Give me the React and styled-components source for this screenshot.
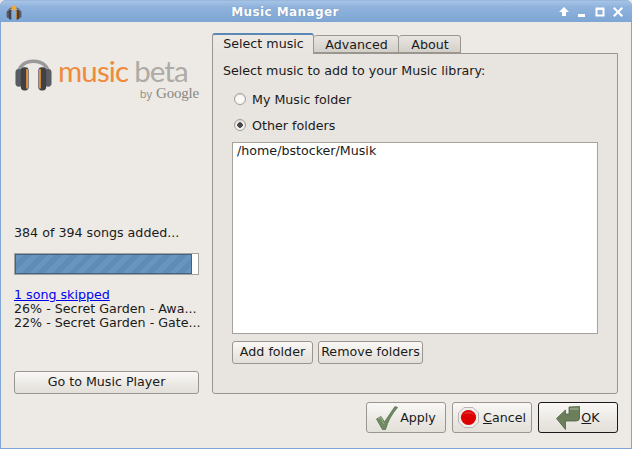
import React from "react";
import styled, { createGlobalStyle } from "styled-components";

const Global = createGlobalStyle`
  html, body { margin: 0; padding: 0; background: #edeae6; }
  #root { width: 632px; height: 449px; overflow: hidden; }
  * { box-sizing: border-box; }
`;

const Win = styled.div`
  width: 632px; height: 449px; display: flex; flex-direction: column;
  font-family: "DejaVu Sans", sans-serif; font-size: 12.67px; color: #1a1a1a;
  background: #7fa6d4; border-radius: 6px 6px 0 0; overflow: hidden;
`;
const TitleBar = styled.div`
  height: 22px; flex: none; display: flex; align-items: center; padding: 0 8px 0 6px;
  background: linear-gradient(#a5c3e6 0, #8fb2dc 30%, #7ea6d5 100%);
  border-top: 1px solid #9ab8dc;
`;
const TitleIcon = styled.svg` width: 16px; height: 16px; flex: none; `;
const Title = styled.div`
  flex: 1; text-align: center; color: #fff; font-weight: 700; font-size: 12px; letter-spacing: 0.4px;
  padding-right: 10px; text-shadow: 0 0 1px #58789f;
`;
const Controls = styled.div` display: flex; align-items: center; gap: 6px; `;
const CtrlIcon = styled.svg` width: 12px; height: 12px; display: block; `;
const Body = styled.div`
  flex: 1; margin: 0 1px 1px; background: #edeae6; display: flex; flex-direction: column;
  padding: 11px 13px 15px 13px; min-height: 0;
`;
const Main = styled.div` display: flex; gap: 13px; height: 361px; flex: none; `;
const Left = styled.div` width: 185px; flex: none; display: flex; flex-direction: column; `;
const Logo = styled.div` display: flex; height: 52px; margin-top: 19px; align-items: flex-start; `;
const Phones = styled.svg` width: 39px; height: 40px; flex: none; `;
const LogoText = styled.div` margin-left: 5px; display: flex; flex-direction: column; width: 141px; margin-top: 1px; `;
const LogoLine = styled.div` font-family: Lato, "Open Sans", sans-serif; font-size: 29.5px; font-weight: 400; line-height: 36px; height: 35px; white-space: nowrap; letter-spacing: -0.9px; `;
const Orange = styled.span` color: #ef8b3a; `;
const Gray = styled.span` color: #aeaaa5; margin-left: 6px; `;
const By = styled.div` text-align: right; font-size: 11px; line-height: 14px; color: #8e8b87; font-family: "Open Sans", sans-serif; white-space: nowrap; margin-top: -2px; `;
const Goog = styled.span` font-family: "Liberation Serif", serif; font-size: 15px; margin-left: 4px; color: #8a8884; letter-spacing: -0.2px; `;
const Status = styled.div` margin-top: 119px; height: 19px; line-height: 19px; white-space: nowrap; `;
const Progress = styled.div`
  margin-top: 11px; height: 22px; border: 1px solid #a5a29c; background: #fff; display: flex;
`;
const Fill = styled.div`
  height: 100%; border: 1px solid #3f6488;
  background: repeating-linear-gradient(135deg, #6895c0 0 5.5px, #5f8cb7 5.5px 11px);
`;
const LinkText = styled.a` display: block; margin-top: 13px; color: #0000ee; text-decoration: underline; line-height: 14px; height: 14px; `;
const Line = styled.div` line-height: 14px; height: 14px; white-space: nowrap; `;
const Btn = styled.div`
  display: flex; align-items: center; justify-content: center; white-space: nowrap; flex: none;
  height: ${p => p.$h || 23}px; width: ${p => (p.$w ? p.$w + "px" : "auto")};
  padding-bottom: ${p => (p.$h ? 0 : 2)}px;
  border: 1px solid ${p => (p.$def ? "#1a1a1a" : "#9a968f")}; border-radius: 3px;
  background: linear-gradient(#f9f8f6, #ebe8e3 60%, #e3e0da);
`;
const Spacer = styled.div` flex: 1; `;
const Right = styled.div` flex: 1; display: flex; flex-direction: column; min-width: 0; `;
const Tabs = styled.div` display: flex; height: 20px; align-items: flex-end; position: relative; z-index: 1; flex: none; `;
const Tab = styled.div`
  width: ${p => p.$w}px; height: ${p => (p.$active ? 21 : 18)}px; flex: none; text-align: center;
  line-height: 18px; padding-left: 1px;
  border: 1px solid #9a968f; border-bottom: ${p => (p.$active ? "none" : "1px solid #9a968f")}; border-left-width: ${p => (p.$first ? 1 : 0)}px;
  border-top: ${p => (p.$active ? "2px solid #5b87b5" : "1px solid #9a968f")};
  border-radius: 3px 3px 0 0;
  background: ${p => (p.$active ? "linear-gradient(#edeae6, #e8e4df)" : "linear-gradient(#e9e6e1, #d3cfc9)")};
  margin-bottom: ${p => (p.$active ? -1 : 0)}px;
`;
const Panel = styled.div`
  flex: 1; border: 1px solid #9a968f; border-radius: 0 0 3px 3px; background: #e8e4df;
  padding: 9px 19px 19px 10px; display: flex; flex-direction: column; min-height: 0;
`;
const Prompt = styled.div` line-height: 16px; height: 16px; white-space: nowrap; `;
const RadioRow = styled.div` display: flex; align-items: center; height: 16px; margin-top: ${p => p.$mt}px; margin-left: 11px; gap: 6px; `;
const Radio = styled.span`
  width: 12px; height: 12px; border-radius: 50%; flex: none; border: 1px solid #a09c96;
  background: ${p => (p.$on ? "radial-gradient(circle, #45474a 0 2.5px, #f4f2ef 3px)" : "#faf9f7")};
  box-shadow: inset 0 1px 1px #d8d4ce;
`;
const ListBox = styled.div`
  margin: 9px 0 0 9px; width: 366px; height: 192px; background: #fff; border: 1px solid #a5a29c; padding: 0 4px;
  line-height: 15px; flex: none;
`;
const FolderRow = styled.div` display: flex; gap: 5px; margin: 7px 0 0 9px; `;
const Bottom = styled.div` display: flex; justify-content: flex-end; gap: 6px; margin-top: 8px; flex: none; `;
const Under = styled.span` text-decoration: underline; `;
const BtnIcon = styled.svg` flex: none; margin-right: ${p => p.$mr ?? 2}px; `;

const Check = () => (
  <BtnIcon width="22" height="24" viewBox="0 0 22 24" $mr={2}>
    <path d="M0.5 13 L5 10.5 L8.5 16 L19 0.5 L21.5 1.5 Q13 11 9.5 23.5 L6.5 23.5 Z" fill="#6f8b62" stroke="#55704b" strokeWidth="0.8" strokeLinejoin="round" />
    <path d="M2 13 L5 11.5 L8 18" fill="none" stroke="#9db191" strokeWidth="1" />
  </BtnIcon>
);
const Stop = () => (
  <BtnIcon width="21" height="21" viewBox="0 0 21 21" $mr={4}>
    <polygon points="6,0.5 15,0.5 20.5,6 20.5,15 15,20.5 6,20.5 0.5,15 0.5,6" fill="#efeeec" stroke="#b9b6b1" />
    <circle cx="10.5" cy="10.5" r="7.6" fill="#dc0000" />
    <path d="M4 8 Q10.5 1.5 17 8 Q10.5 5 4 8" fill="#e84a4a" opacity="0.6" />
  </BtnIcon>
);
const OkArrow = () => (
  <BtnIcon width="24" height="24" viewBox="0 0 24 24" $mr={1}>
    <path d="M0.5 12.5 L9.5 4 L9.5 8 L13 8 L13 1 L23.5 0.5 L23.5 12 Q23.5 15 20 15 L9.5 15 L9.5 23.5 Z" fill="#6b7f5a" stroke="#4f6044" strokeWidth="0.8" strokeLinejoin="round" />
    <path d="M14 2 L22.5 1.5 L22.5 4 L14 4 Z" fill="#8ea080" />
  </BtnIcon>
);

const HeadphonesGlyph = ({ band }) => (
  <>
    <path d="M5 24 C2 4 38 4 35 24" fill="none" stroke={band} strokeWidth="3.6" />
    <rect x="1.5" y="17" width="7" height="18" rx="3.5" fill="#5a5c62" />
    <rect x="31.5" y="17" width="7" height="18" rx="3.5" fill="#5a5c62" />
    <rect x="7" y="15" width="8" height="24" rx="3.5" fill="#3f4146" />
    <rect x="25" y="15" width="8" height="24" rx="3.5" fill="#3f4146" />
    <rect x="12.5" y="17" width="1.8" height="20" fill="#f29a35" />
    <rect x="25.7" y="17" width="1.8" height="20" fill="#f29a35" />
  </>
);

export default function App() {
  return (
    <>
      <Global />
      <Win>
        <TitleBar>
          <TitleIcon viewBox="0 0 40 40">
            <HeadphonesGlyph band="#6b6d70" />
            <circle cx="20" cy="10" r="6" fill="#f2a93a" />
          </TitleIcon>
          <Title>Music Manager</Title>
          <Controls>
            <CtrlIcon viewBox="0 0 12 12"><path d="M6 1 L11 6 L8 6 L8 10 L4 10 L4 6 L1 6 Z" fill="#fff" /></CtrlIcon>
            <CtrlIcon viewBox="0 0 12 12"><rect x="2" y="8" width="7" height="3" fill="#fff" /></CtrlIcon>
            <CtrlIcon viewBox="0 0 12 12"><path d="M1.5 1.5 H10.5 V10.5 H1.5 Z M3.5 4 V8.5 H8.5 V4 Z" fill="#fff" fillRule="evenodd" /></CtrlIcon>
            <CtrlIcon viewBox="0 0 12 12"><path d="M1 2.5 L2.5 1 L6 4.5 L9.5 1 L11 2.5 L7.5 6 L11 9.5 L9.5 11 L6 7.5 L2.5 11 L1 9.5 L4.5 6 Z" fill="#fff" /></CtrlIcon>
          </Controls>
        </TitleBar>
        <Body>
          <Main>
            <Left>
              <Logo>
                <Phones viewBox="0 0 40 40"><HeadphonesGlyph band="#9a9a9a" /></Phones>
                <LogoText>
                  <LogoLine><Orange>music</Orange><Gray>beta</Gray></LogoLine>
                  <By>by<Goog>Google</Goog></By>
                </LogoText>
              </Logo>
              <Status>384 of 394 songs added...</Status>
              <Progress><Fill style={{ width: "96.6%" }} /></Progress>
              <LinkText>1 song skipped</LinkText>
              <Line>26% - Secret Garden - Awa...</Line>
              <Line>22% - Secret Garden - Gate...</Line>
              <Spacer />
              <Btn>Go to Music Player</Btn>
            </Left>
            <Right>
              <Tabs>
                <Tab $active $first $w={102}>Select music</Tab>
                <Tab $w={85}>Advanced</Tab>
                <Tab $w={62}>About</Tab>
              </Tabs>
              <Panel>
                <Prompt>Select music to add to your Music library:</Prompt>
                <RadioRow $mt={12}><Radio />My Music folder</RadioRow>
                <RadioRow $mt={10}><Radio $on />Other folders</RadioRow>
                <ListBox>/home/bstocker/Musik</ListBox>
                <FolderRow>
                  <Btn $w={81}>Add folder</Btn>
                  <Btn $w={105}>Remove folders</Btn>
                </FolderRow>
              </Panel>
            </Right>
          </Main>
          <Bottom>
            <Btn $w={80} $h={31}><Check />Apply</Btn>
            <Btn $w={80} $h={31}><Stop /><span><Under>C</Under>ancel</span></Btn>
            <Btn $w={80} $h={31} $def><OkArrow /><span><Under>O</Under>K</span></Btn>
          </Bottom>
        </Body>
      </Win>
    </>
  );
}
